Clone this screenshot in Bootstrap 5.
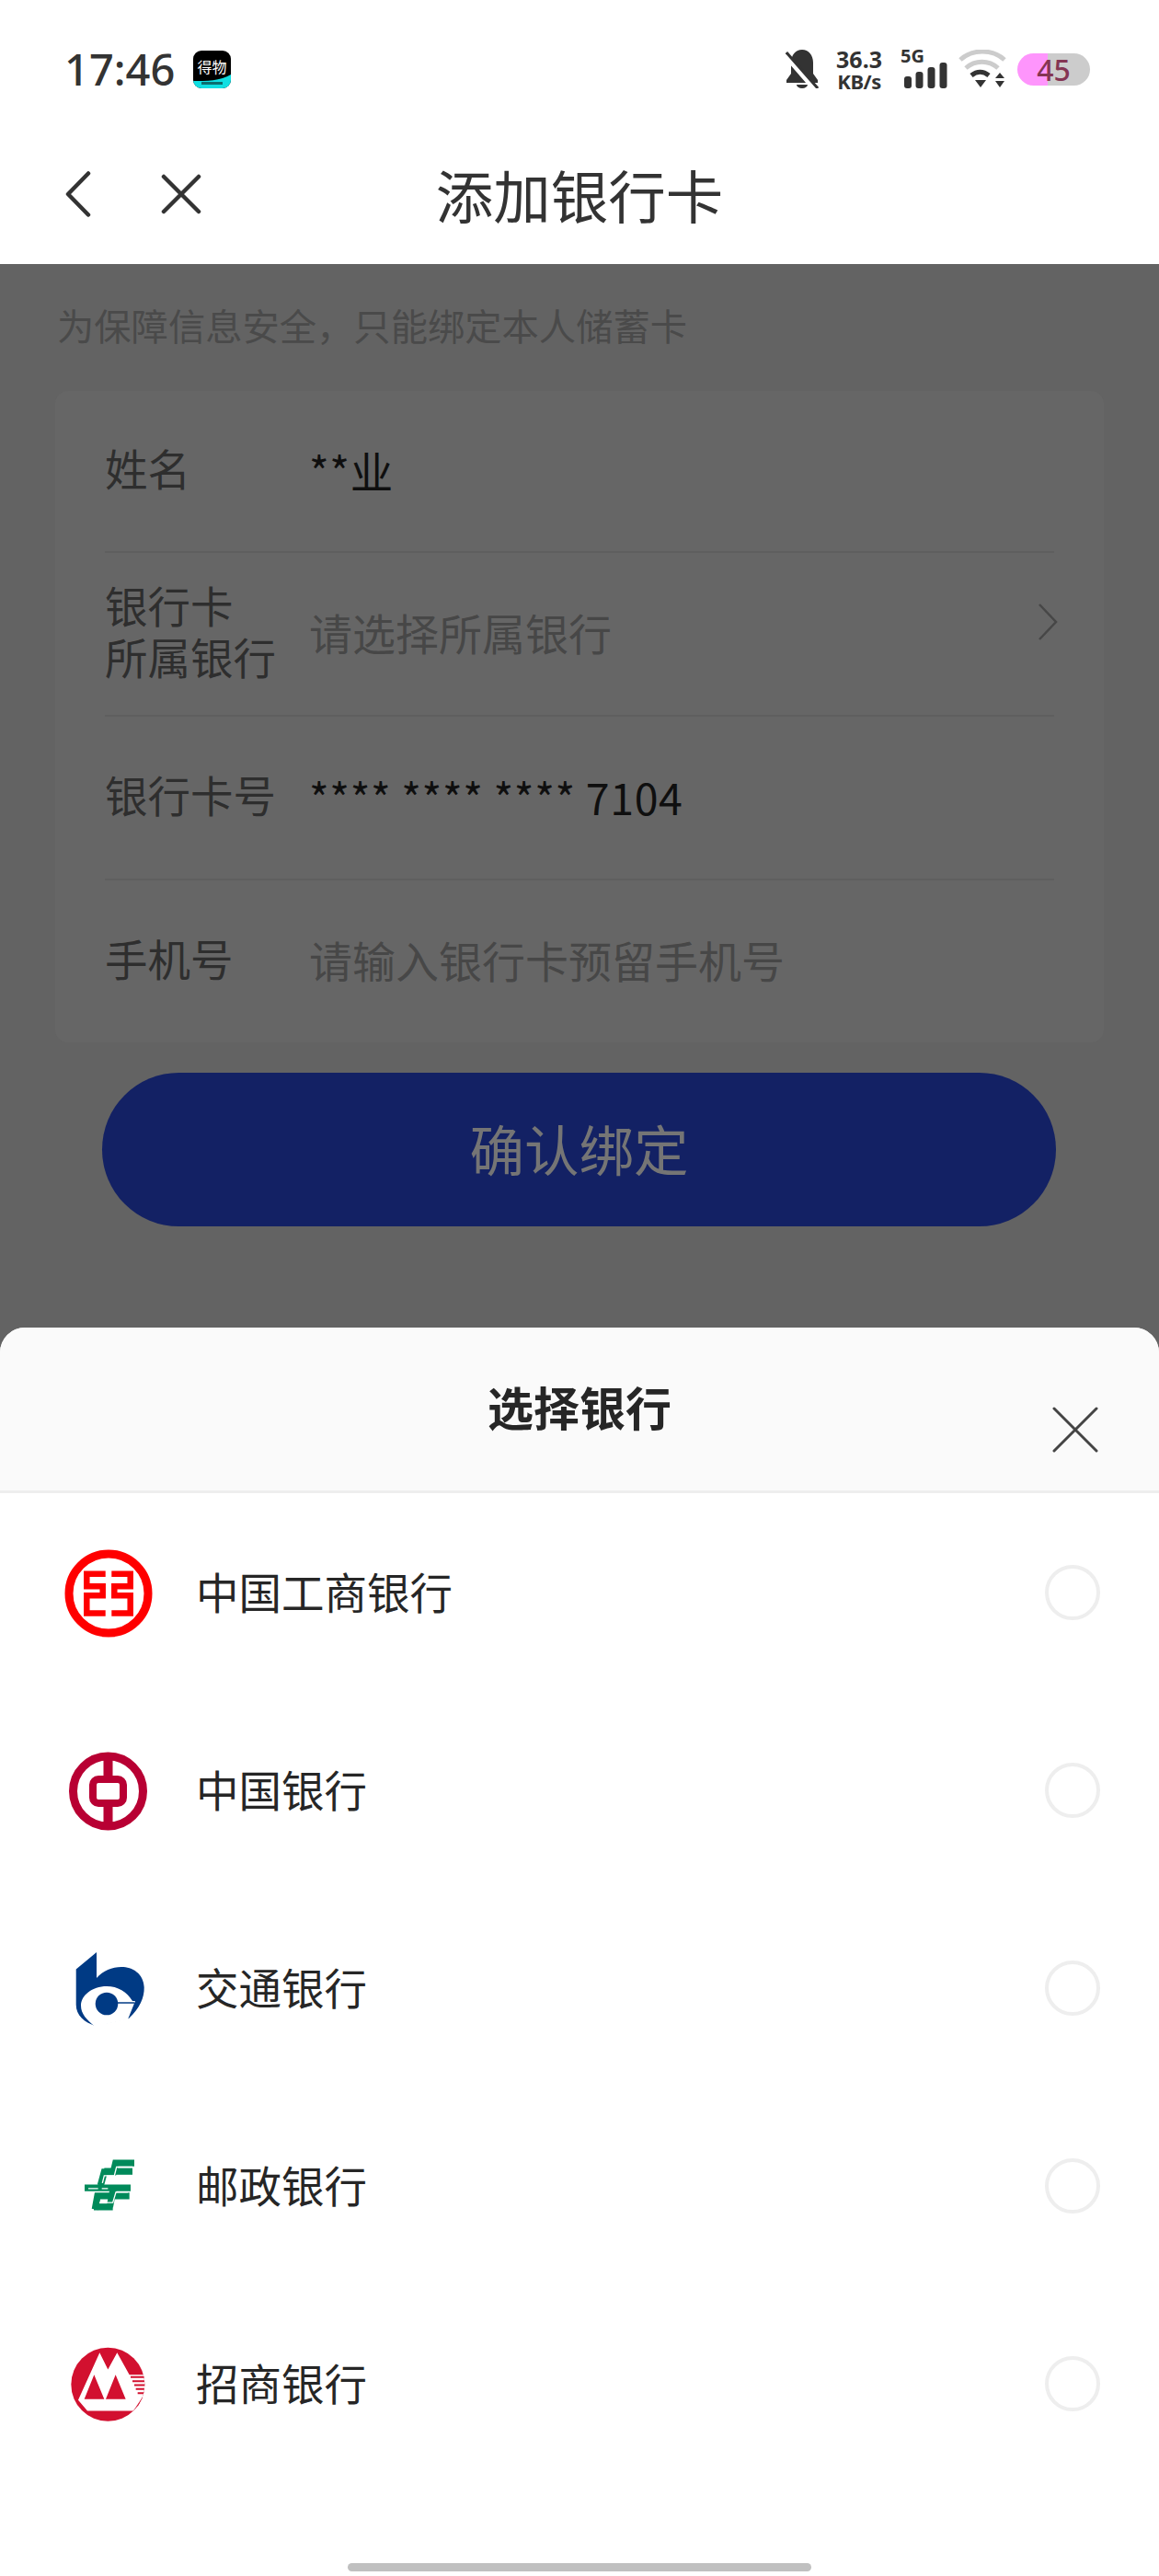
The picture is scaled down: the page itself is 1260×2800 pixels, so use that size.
<!DOCTYPE html>
<html lang="zh">
<head>
  <meta charset="UTF-8" />
  <meta name="viewport" content="width=device-width, initial-scale=1" />
  <title>添加银行卡</title>
  <link href="https://cdn.jsdelivr.net/npm/bootstrap@5.3.3/dist/css/bootstrap.min.css" rel="stylesheet" />
  <style>
    html, body { height: 2800px; }
    body { width: 1260px; margin: 0; overflow: hidden; background: #636363; font-family: "Noto Sans CJK SC", "Noto Sans", sans-serif; color: #333; }
    .status-bar { height: 143px; padding: 7px 75px 0 70px; background: #fff; font-family: "Noto Sans", Roboto, sans-serif; }
    .clock { font-size: 47px; font-weight: 500; color: #333; line-height: 1; }
    .app-icon { margin-left: 20px; }
    .net-speed { width: 54px; margin-left: 17px; font-weight: 700; text-align: center; color: #333; }
    .net-speed div:first-child { font-size: 25px; line-height: 25px; }
    .net-speed div:last-child { font-size: 22px; line-height: 22px; letter-spacing: -.5px; }
    .signal-wrap { position: relative; width: 52px; height: 42px; margin-left: 18px; }
    .net-type { position: absolute; left: 0; top: -3px; font-size: 20px; font-weight: 700; line-height: 20px; color: #333; }
    .wifi-icon { margin-left: 11px; }
    .batt { width: 79px; height: 35px; margin-left: 12px; border-radius: 18px; background: linear-gradient(90deg, #fe95fc 0 42%, #ccc 42%); color: #843553; font-size: 32px; font-weight: 500; line-height: 35px; text-align: center; }
    .top-nav { height: 144px; padding: 0 0 8px 71px; position: relative; background: #fff; }
    .top-title { position: absolute; left: 0; right: 0; top: 0; line-height: 136px; text-align: center; font-size: 62.5px; color: #333; }
    .nav-x { margin-left: 76px; }
    .dimmed { height: 1156px; padding: 0 60px; background: #636363; }
    .tip { height: 138px; margin: 0 0 0 2px; padding-top: 46px; font-size: 40.3px; line-height: 40px; color: #4a4a4a; }
    .form-box { background: #666; border-radius: 14px; padding: 0 54px; }
    .form-line { height: 178px; border-bottom: 2px solid #5f5f5f; font-size: 46.5px; line-height: 56px; }
    .form-line:first-child { height: 176px; }
    .form-line:last-child { height: 176px; border-bottom: 0; }
    .form-label { width: 223px; flex: none; color: #2e2e2e; }
    .form-val { margin-left: -1px; padding-bottom: 2px; color: #0f0f0f; letter-spacing: .6px; }
    .form-ph { margin-left: -1px; padding-bottom: 5px; font-size: 47px; color: #474747; }
    .arrow-right { margin: 0 -5px 26px auto; }
    .bind-btn { display: block; margin: 33px 0 0 51px; width: 1037px; height: 167px; padding: 0 0 5px; border: 0; border-radius: 84px; background: #132164; color: #757575; font-size: 59.5px; line-height: 160px; text-align: center; }
    .sheet { height: 1357px; border-radius: 27px 27px 0 0; background: #fff; position: relative; overflow: hidden; }
    .sheet-head { height: 180px; background: #fafafa; border-bottom: 3px solid #eee; }
    .sheet-title { font-size: 50px; font-weight: 700; line-height: 50px; padding-top: 60px; text-align: center; color: #262626; }
    .sheet-x { position: absolute; left: 1144px; top: 86px; }
    .bank-row { height: 215px; padding: 0 61px 0 60px; }
    .bank-logo { width: 116px; height: 116px; flex: none; }
    .bank-name { margin-left: 37px; padding-bottom: 3px; font-size: 46.5px; line-height: 1; color: #262626; }
    .bank-radio { width: 60px; height: 60px; margin-left: auto; margin-right: 3px; border-radius: 50%; border: 4px solid #eee; }
    .home-bar { position: absolute; left: 378px; bottom: 5px; width: 504px; height: 9px; border-radius: 5px; background: #c0c0c0; }
  </style>
</head>
<body>
  <div class="status-bar d-flex align-items-center">
    <span class="clock">17:46</span>
    <svg class="app-icon" width="41" height="41" viewBox="0 0 41 41">
      <defs><clipPath id="appclip"><rect width="41" height="41" rx="9"/></clipPath></defs>
      <g clip-path="url(#appclip)">
        <rect width="41" height="41" fill="#000"/>
        <path d="M0 33 C14 33 30 33 41 26 V41 H0z" fill="#10dfe2"/>
        <text x="20.5" y="24" text-anchor="middle" font-size="16" fill="#fff" font-family="Noto Sans CJK SC, sans-serif">得物</text>
        <rect x="9" y="34" width="23" height="3" fill="#0a6e70"/>
      </g>
    </svg>
    <div class="ms-auto d-flex align-items-center">
      <svg width="36" height="42" viewBox="0 0 36 42">
        <path d="M18 0c7 0 12 6 12 14v12l5 7v3H1v-3l5-7V14C6 6 11 0 18 0z" fill="#333"/>
        <path d="M12 38h12a6 4 0 0 1-12 0z" fill="#333"/>
        <path d="M0 6 L33 44" stroke="#fff" stroke-width="6"/>
        <path d="M1 3 L35 42" stroke="#333" stroke-width="3"/>
      </svg>
      <div class="net-speed"><div>36.3</div><div>KB/s</div></div>
      <div class="signal-wrap">
        <span class="net-type">5G</span>
        <svg class="position-absolute top-0 start-0" width="52" height="42" viewBox="0 0 52 42">
          <rect x="4" y="29" width="8" height="13" rx="3" fill="#333"/>
          <rect x="16.500" y="24" width="8" height="18" rx="3" fill="#333"/>
          <rect x="29.500" y="19" width="8" height="23" rx="3" fill="#333"/>
          <rect x="42.500" y="14" width="8" height="28" rx="3" fill="#333"/>
        </svg>
      </div>
      <svg class="wifi-icon" width="52" height="42" viewBox="0 0 52 42">
        <path d="M2 11 C15 -1 37 -1 50 11" stroke="#ccc" stroke-width="5" fill="none"/>
        <path d="M8 20 C18 11 33 11 43 20" stroke="#ccc" stroke-width="5" fill="none"/>
        <path d="M14 28 C20 23 27 23 33 28" stroke="#333" stroke-width="5" fill="none"/>
        <path d="M18 33 H30 L24 41z" fill="#333"/>
        <path d="M40 31 L45 25 L50 31z M40 34 H50 L45 41z" fill="#333"/>
      </svg>
      <div class="batt">45</div>
    </div>
  </div>

  <div class="top-nav d-flex align-items-center">
    <div class="top-title">添加银行卡</div>
    <svg width="28" height="50" viewBox="0 0 28 50">
      <path d="M25 2.500 L3 25 L25 47.500" stroke="#333" stroke-width="4.500" stroke-linecap="round" stroke-linejoin="round" fill="none"/>
    </svg>
    <svg class="nav-x" width="44" height="44" viewBox="0 0 44 44">
      <path d="M3 3 L41 41 M41 3 L3 41" stroke="#333" stroke-width="4.500" stroke-linecap="round" fill="none"/>
    </svg>
  </div>

  <div class="dimmed">
    <p class="tip">为保障信息安全，只能绑定本人储蓄卡</p>
    <div class="form-box">
      <div class="form-line d-flex align-items-center">
        <div class="form-label">姓名</div>
        <div class="form-val">**业</div>
      </div>
      <div class="form-line d-flex align-items-center">
        <div class="form-label">银行卡<br>所属银行</div>
        <div class="form-ph">请选择所属银行</div>
        <svg class="arrow-right" width="24" height="40" viewBox="0 0 24 40">
          <path d="M3 1 L21 20 L3 39" stroke="#474747" stroke-width="2.500" fill="none"/>
        </svg>
      </div>
      <div class="form-line d-flex align-items-center">
        <div class="form-label">银行卡号</div>
        <div class="form-val">**** **** **** 7104</div>
      </div>
      <div class="form-line d-flex align-items-center">
        <div class="form-label">手机号</div>
        <div class="form-ph">请输入银行卡预留手机号</div>
      </div>
    </div>
    <button class="bind-btn" type="button">确认绑定</button>
  </div>

  <div class="sheet">
    <div class="sheet-head">
      <div class="sheet-title">选择银行</div>
      <svg class="sheet-x" width="50" height="50" viewBox="0 0 50 50">
        <path d="M2 2 L48 48 M48 2 L2 48" stroke="#444" stroke-width="3" stroke-linecap="round"/>
      </svg>
    </div>

    <div class="bank-row d-flex align-items-center">
      <svg class="bank-logo" viewBox="0 0 116 116">
        <circle cx="58" cy="59" r="43" fill="none" stroke="#f00" stroke-width="9"/>
        <g fill="none" stroke="#f00" stroke-width="6.500">
          <path d="M54.700 37.800 H34.300 V51.200 H51.700 V61.200 H34.300 V80.500 H54.700"/>
          <path d="M61.300 37.800 H81.700 V51.200 H64.300 V61.200 H81.700 V80.500 H61.300"/>
        </g>
      </svg>
      <span class="bank-name">中国工商银行</span>
      <span class="bank-radio"></span>
    </div>

    <div class="bank-row d-flex align-items-center">
      <svg class="bank-logo" viewBox="0 0 116 116">
        <circle cx="57.500" cy="59" r="38" fill="none" stroke="#b80033" stroke-width="9"/>
        <rect x="52.500" y="21" width="10" height="26" fill="#b80033"/>
        <rect x="52.500" y="71" width="10" height="26" fill="#b80033"/>
        <rect x="41" y="46" width="33" height="26" rx="6" fill="none" stroke="#b80033" stroke-width="8"/>
      </svg>
      <span class="bank-name">中国银行</span>
      <span class="bank-radio"></span>
    </div>

    <div class="bank-row d-flex align-items-center">
      <svg class="bank-logo" viewBox="0 0 116 116">
        <path d="M45 19 L22.700 37.500 V76 C22.700 88 32 95 43.300 99 L80 91 C92 80 97 68 96.700 57 C96 42 84 35 72 35 C62 35 52 39 45 47z" fill="#003a84"/>
        <path d="M28 77 C28 66 40 56 56 56 C68 56 78 62 84 72 H87 L79 92 L60 96 L43.300 100 C34 92 28 86 28 77z" fill="#fff"/>
        <circle cx="56" cy="75" r="12.300" fill="#003a84"/>
        <path d="M60 74 H86" stroke="#003a84" stroke-width="1.500"/>
      </svg>
      <span class="bank-name">交通银行</span>
      <span class="bank-radio"></span>
    </div>

    <div class="bank-row d-flex align-items-center">
      <svg class="bank-logo" viewBox="0 0 116 116">
        <g transform="translate(20 17.500) scale(.3333)">
          <g fill="none" stroke="#008a5a" stroke-width="22">
            <path d="M198 47 H137 L130 76 H100 L88 120"/>
            <path d="M192 74 H100"/>
            <path d="M36 128 H186"/>
            <path d="M182 154 H78 L70 198"/>
            <path d="M130 128 L118 190"/>
            <path d="M128 190 H66"/>
          </g>
          <g fill="none" stroke="#fff" stroke-width="4">
            <path d="M192 60 H140 L133 88 H100 L94 112"/>
            <path d="M48 130 H80 M92 130 H112"/>
            <path d="M178 142 H138 L128 176 H84"/>
          </g>
        </g>
      </svg>
      <span class="bank-name">邮政银行</span>
      <span class="bank-radio"></span>
    </div>

    <div class="bank-row d-flex align-items-center">
      <svg class="bank-logo" viewBox="0 0 116 116">
        <defs><clipPath id="cmbclip"><circle cx="232" cy="214" r="120"/></clipPath></defs>
        <g transform="translate(-20 -12.500) scale(.3333)">
          <circle cx="232" cy="214" r="120" fill="#d2102f"/>
          <g clip-path="url(#cmbclip)">
            <path d="M135 265 L205 110 L232 165 L262 110 L302 182 L360 182 V255 H345 L315 300 H165z" fill="#fff"/>
            <path d="M155 262 L187 182 L220 262z M225 262 L257 182 L290 262z" fill="#d2102f"/>
            <path d="M306 190 H360 M312 203 H360 M318 216 H360 M323 229 H360 M329 242 H360" stroke="#d2102f" stroke-width="6"/>
            <path d="M345 255 H360 V300 H320z" fill="#d2102f"/>
          </g>
        </g>
      </svg>
      <span class="bank-name">招商银行</span>
      <span class="bank-radio"></span>
    </div>

    <div class="home-bar"></div>
  </div>
<script src="https://cdn.jsdelivr.net/npm/bootstrap@5.3.3/dist/js/bootstrap.bundle.min.js"></script>
</body>
</html>
